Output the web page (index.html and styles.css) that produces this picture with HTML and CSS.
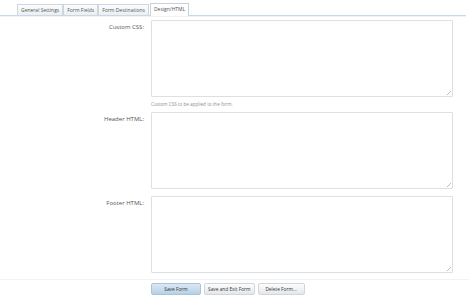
FILE: index.html
```html
<!DOCTYPE html>
<html>
<head>
<meta charset="utf-8">
<link rel="stylesheet" href="styles.css">
</head>
<body>
<div class="page">
  <div class="tabs">
    <div class="tab">General Settings</div>
    <div class="tab">Form Fields</div>
    <div class="tab">Form Destinations</div>
    <div class="tab active">Design/HTML</div>
  </div>
  <div class="form">
    <div class="row">
      <label class="label">Custom CSS:</label>
      <div class="field">
        <textarea class="area"></textarea>
        <div class="help">Custom CSS to be applied to the form.</div>
      </div>
    </div>
    <div class="row">
      <label class="label">Header HTML:</label>
      <div class="field"><textarea class="area"></textarea></div>
    </div>
    <div class="row">
      <label class="label">Footer HTML:</label>
      <div class="field"><textarea class="area"></textarea></div>
    </div>
  </div>
  <div class="actions">
    <button class="btn primary">Save Form</button>
    <button class="btn">Save and Exit Form</button>
    <button class="btn delete">Delete Form...</button>
  </div>
</div>
</body>
</html>
```
FILE: styles.css
```css
html, body {
  margin: 0;
  padding: 0;
  background: #ffffff;
}
.page {
  width: 469px;
  height: 300px;
  font-family: "Open Sans", "DejaVu Sans", sans-serif;
  color: #444;
  overflow: hidden;
}
.tabs {
  display: flex;
  align-items: flex-end;
  margin: 3px 3px 0 0;
  padding-left: 17px;
  height: 12px;
  border-bottom: 1px solid #c7d8e8;
  box-shadow: 0 1px 0 #eef4fa;
}
.tab {
  height: 10px;
  line-height: 10px;
  padding: 0 3px;
  margin-right: 0;
  font-size: 5px;
  color: #555;
  border: 1px solid #cfd6dd;
  border-bottom: none;
  background: linear-gradient(#fbfcfd, #eceff2);
  white-space: nowrap;
}
.tab.active {
  height: 12px;
  line-height: 11px;
  background: #fff;
  border-color: #c7d1da;
  margin-left: 1px;
  margin-bottom: -1px;
  padding: 0 3px;
}
.form {
  display: flex;
  flex-direction: column;
  padding-top: 4px;
}
.row {
  display: grid;
  grid-template-columns: 144px 302px;
  column-gap: 7px;
  margin-bottom: 7px;
}
.label {
  text-align: right;
  font-size: 6px;
  color: #555;
  padding-top: 3px;
}
.field {
  display: flex;
  flex-direction: column;
}
.area {
  display: block;
  box-sizing: border-box;
  width: 302px;
  height: 77px;
  margin: 0;
  padding: 2px;
  border: 1px solid #dde0e3;
  border-radius: 1px;
  resize: none;
  font-size: 6px;
  background:
    linear-gradient(-45deg, transparent 0.8px, #b8bcc0 0.8px, #b8bcc0 1.4px, transparent 1.4px, transparent 2.6px, #b8bcc0 2.6px, #b8bcc0 3.2px, transparent 3.2px) no-repeat right 1px bottom 1px / 5px 5px,
    #fff;
}
.help {
  font-size: 4.6px;
  color: #8a8f94;
  padding-top: 4px;
  margin-bottom: -2px;
}
.actions {
  display: flex;
  gap: 3px;
  padding: 3px 0 0 151px;
  margin-top: -1px;
  border-top: 1px solid #f1f3f5;
}
.btn {
  height: 12px;
  padding: 0 3px;
  font-family: "Open Sans", "DejaVu Sans", sans-serif;
  font-size: 4.8px;
  color: #333;
  border: 1px solid #d2d6da;
  border-radius: 2px;
  background: linear-gradient(#fdfdfd, #e4e7ea);
  cursor: pointer;
}
.btn.primary {
  width: 50px;
  border-color: #a9c3da;
  background: linear-gradient(#dbe8f4, #b7d0e6);
}
.btn.delete {
  width: 47px;
}
```
